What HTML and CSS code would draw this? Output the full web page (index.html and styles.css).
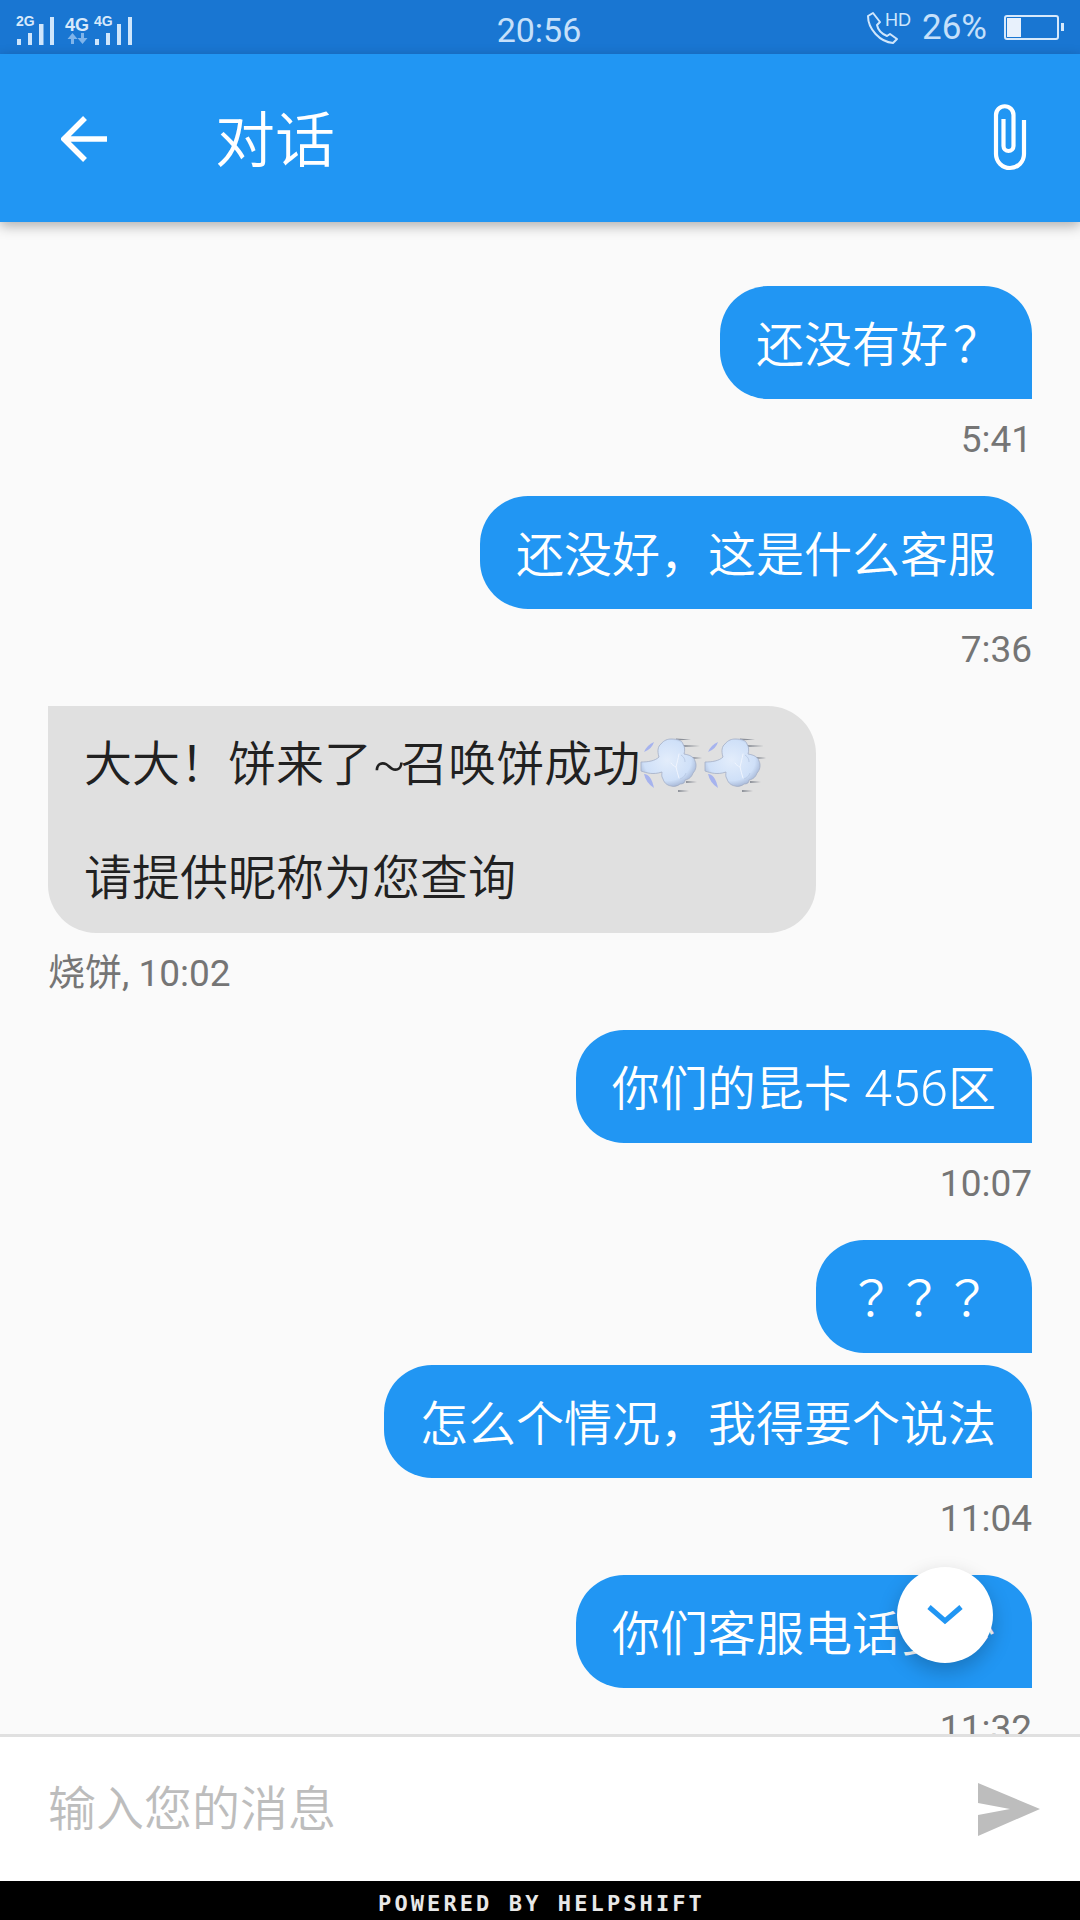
FILE: index.html
```html
<!DOCTYPE html>
<html lang="zh-CN">
<head>
<meta charset="utf-8">
<title>对话</title>
<link rel="stylesheet" href="styles.css">
</head>
<body>
<div class="app">
  <header class="status">
    <div class="status-left">
      <svg class="signal" width="122" height="32" viewBox="14 11 122 32">
        <text x="16" y="23" class="sig-small">2G</text>
        <path d="M17 36h4v6h-4zM28 30h4v12h-4zM39 21h4.500v21H39zM50 14h4v28h-4z" fill="#cfe6fc"/>
        <text x="65" y="28" class="sig-large">4G</text>
        <path d="M71 41v-5h-3.500l5-6 5 6H74v5zM81 30v5h-3.500l5 6 5-6H84v-5z" fill="#7fb4ea"/>
        <text x="94" y="23" class="sig-small">4G</text>
        <path d="M95 36h4v6h-4zM106 30h4v12h-4zM117 21h4v21h-4zM128 14h4v28h-4z" fill="#cfe6fc"/>
      </svg>
    </div>
    <div class="clock">20:56</div>
    <div class="status-right">
      <svg class="phone" width="44" height="32" viewBox="0 0 44 32">
        <path d="M2 5l5-3 7 9-3 3c1 5 5 9 10 11l3-2 7 5-4 4C14 31 2 18 2 5z" fill="none" stroke="#cfe6fc" stroke-width="2" stroke-linejoin="round"/>
        <text x="19" y="15" class="hd">HD</text>
      </svg>
      <span class="pct">26%</span>
      <div class="battery"><span class="battery-fill"></span></div>
      <span class="battery-nub"></span>
    </div>
  </header>

  <header class="appbar">
    <svg class="back" width="48" height="48" viewBox="0 0 48 48">
      <path d="M46 24H4M24 3L3 24l21 21" fill="none" stroke="#fff" stroke-width="5.500"/>
    </svg>
    <h1 class="title">对话</h1>
    <svg class="clip" width="36" height="68" viewBox="0 0 36 68">
      <path d="M32 16V50a14 14 0 0 1-28 0V11a8.750 8.750 0 0 1 17.500 0V42a5 5 0 0 1-10 0V15" fill="none" stroke="#fff" stroke-width="4.200"/>
    </svg>
  </header>

  <main class="thread">
    <div class="msg out"><div class="bubble">还没有好<span class="q-end">？</span></div><div class="meta">5:41</div></div>
    <div class="msg out"><div class="bubble">还没好，这是什么客服</div><div class="meta">7:36</div></div>
    <div class="msg in">
      <div class="bubble">大大！饼来了<span class="tilde">~</span>召唤饼成功<svg class="emoji" width="56" height="56" viewBox="0 0 56 56"><use href="#dash"/></svg><svg class="emoji" width="56" height="56" viewBox="0 0 56 56"><use href="#dash"/></svg><br><br>请提供昵称为您查询</div>
      <div class="meta">烧饼, 10:02</div>
    </div>
    <div class="msg out"><div class="bubble">你们的昆卡<span class="latin"> 456</span>区</div><div class="meta">10:07</div></div>
    <div class="msg out grouped"><div class="bubble"><span class="q">？？？</span></div></div>
    <div class="msg out"><div class="bubble">怎么个情况，我得要个说法</div><div class="meta">11:04</div></div>
    <div class="msg out"><div class="bubble">你们客服电话多少</div><div class="meta">11:32</div></div>
    <button class="fab" type="button" aria-label="scroll down">
      <svg width="36" height="24" viewBox="0 0 36 24"><path d="M2 4l16 14L34 4" fill="none" stroke="#2196f3" stroke-width="5"/></svg>
    </button>
  </main>

  <footer class="composer">
    <span class="placeholder">输入您的消息</span>
    <svg class="send" width="64" height="54" viewBox="0 0 64 54">
      <path d="M1 1l62 26L1 54V33l32-6L1 21z" fill="#bdbdbd"/>
    </svg>
  </footer>
  <div class="powered">POWERED BY HELPSHIFT</div>
</div>

<svg class="defs" width="0" height="0" aria-hidden="true">
  <defs>
    <radialGradient id="puff" cx="48%" cy="45%" r="58%">
      <stop offset="0" stop-color="#e3edfb"/>
      <stop offset=".74" stop-color="#cfe0f8"/>
      <stop offset=".94" stop-color="#aebfdd"/>
      <stop offset="1" stop-color="#8d9ab6"/>
    </radialGradient>
    <g id="dash">
      <path d="M36 .5L51 1.500 36 2.500zM43 7L60 8 43 9zM52 19L62 20 52 21zM46 43L57 44 46 45zM38 52L49 53 38 54z" fill="#6a6f7a" opacity=".7"/>
      <path d="M4 14q3-7 10-10-2 7-10 10zM4 36q7 0 10 14-8-5-10-14z" fill="#a6b3ee"/>
      <path d="M1 24C8 24 15 23 19 19 17 13 18 8 21 6 24 2 28 1 31 1c6 0 11 1 12 5 2 3 2 7 1 10 6 1 10 3 11 7 2 4 1 9-2 12-1 3-3 6-8 7 0 3-2 4-5 4-2 2-6 3-9 2-5-1-7-4-8-7-2-3-1-5-1-7C13 37 7 35 1 33z" fill="url(#puff)" stroke="#a3aec6" stroke-width=".800"/>
      <path d="M39 16c-1 5-2 9-3 13 1 4 2 8 3 11M36 29c-2-1-4-2-5-4" fill="none" stroke="#f0f5fe" stroke-width="1" stroke-linecap="round"/>
      <path d="M41 17c3 2 4 4 4 7M40 41c3-1 5-3 6-6" fill="none" stroke="#bccde8" stroke-width="1"/>
    </g>
  </defs>
</svg>
</body>
</html>
```
FILE: styles.css
```css
* { box-sizing: border-box; }
html, body { margin: 0; padding: 0; }
body {
  width: 1080px;
  height: 1920px;
  overflow: hidden;
  font-family: Roboto, "Noto Sans CJK SC", sans-serif;
  background: #fafafa;
}
.defs { display: block; width: 0; height: 0; }
.app {
  width: 1080px;
  height: 1920px;
  display: flex;
  flex-direction: column;
}
.status {
  height: 54px;
  flex: none;
  background: #1976d2;
  color: #c6e0fa;
  display: grid;
  grid-template-columns: 1fr auto 1fr;
  align-items: center;
  padding: 0 16px 0 14px;
}
.status-left { display: flex; align-items: center; }
.signal { display: block; overflow: visible; margin-top: 5px; }
.sig-small { font: 700 14px "Liberation Sans", sans-serif; fill: #d7e9fb; }
.sig-large { font: 700 18px "Liberation Sans", sans-serif; fill: #d7e9fb; }
.clock { font-size: 34px; font-weight: 400; line-height: 60px; height: 54px; }
.status-right { display: flex; align-items: center; justify-content: flex-end; }
.phone { display: block; margin-right: 12px; overflow: visible; }
.hd { font: 400 18px "Liberation Sans", sans-serif; fill: #cfe6fc; }
.pct { font-size: 35px; font-weight: 400; margin-right: 17px; }
.battery {
  width: 55px;
  height: 25px;
  border: 2px solid #d7e9fb;
  border-radius: 3px;
  padding: 1px;
}
.battery-fill { display: block; width: 14px; height: 100%; background: #e8f1fc; }
.battery-nub { width: 3px; height: 8px; margin-left: 2px; background: #d7e9fb; }

.appbar {
  height: 168px;
  flex: none;
  background: #2196f3;
  display: flex;
  align-items: center;
  padding: 0 52px 0 61px;
  box-shadow: 0 4px 12px rgba(0, 0, 0, .3);
  position: relative;
  z-index: 1;
}
.back { display: block; flex: none; margin-top: 2px; }
.title {
  margin: -5px 0 0 106px;
  flex: 1;
  font-size: 60px;
  font-weight: 350;
  color: #fff;
  font-family: "Noto Sans CJK SC", sans-serif;
}
.clip { display: block; flex: none; }

.thread {
  flex: 1;
  min-height: 0;
  overflow: hidden;
  position: relative;
  padding: 64px 48px 0;
  display: flex;
  flex-direction: column;
  background: #fafafa;
}
.msg { display: flex; flex-direction: column; flex: none; margin-bottom: 33px; }
.msg.grouped { margin-bottom: 12px; }
.out { align-items: flex-end; }
.in { align-items: flex-start; }
.bubble {
  font-size: 48px;
  line-height: 57px;
  padding: 27px 36px 29px;
  font-weight: 350;
  font-family: "Noto Sans CJK SC", sans-serif;
  white-space: nowrap;
  text-spacing-trim: space-all;
}
.out .bubble {
  background: #2196f3;
  color: #fff;
  border-radius: 48px 48px 0 48px;
  height: 113px;
}
.in .bubble {
  background: #e0e0e0;
  color: #212121;
  border-radius: 0 48px 48px 48px;
  padding: 26px 56px 30px 36px;
  height: 227px;
}
.q { font-family: "Noto Sans CJK TC", sans-serif; margin-left: -5px; margin-right: 5px; }
.q-end { font-family: "Noto Sans CJK TC", sans-serif; margin-left: 5px; margin-right: -5px; }
.latin { font-family: Roboto, sans-serif; font-weight: 300; font-size: 50.500px; line-height: 1; }
.tilde { font-family: Roboto, sans-serif; font-weight: 300; font-size: 50px; line-height: 1; letter-spacing: -6px; }
.emoji { vertical-align: middle; margin: -14px 0 -10px; overflow: visible; }
.emoji + .emoji { margin-left: 8px; }
.meta {
  font-size: 37px;
  font-weight: 400;
  line-height: 49px;
  margin-top: 16px;
  margin-bottom: -1px;
  color: #757575;
  font-family: Roboto, "Noto Sans CJK SC", sans-serif;
}
.fab {
  position: absolute;
  left: 897px;
  top: 1345px;
  width: 96px;
  height: 96px;
  border: 0;
  border-radius: 50%;
  background: #fff;
  box-shadow: 0 8px 20px rgba(0, 0, 0, .22);
  display: flex;
  align-items: center;
  justify-content: center;
  padding: 0;
}
.composer {
  height: 147px;
  flex: none;
  border-top: 3px solid #e0e0e0;
  background: #fff;
  display: flex;
  align-items: center;
  justify-content: space-between;
  padding: 0 39px 0 48px;
}
.placeholder {
  font-size: 48px;
  font-weight: 350;
  color: #bdbdbd;
  font-family: "Noto Sans CJK SC", sans-serif;
  margin-top: -9px;
}
.send { display: block; }
.powered {
  height: 39px;
  flex: none;
  background: #000;
  color: #e8e8e8;
  font-family: "DejaVu Sans Mono", monospace;
  font-weight: 700;
  font-size: 22px;
  letter-spacing: 3.100px;
  line-height: 45px;
  padding-left: 3px;
  text-align: center;
  overflow: hidden;
}
```
